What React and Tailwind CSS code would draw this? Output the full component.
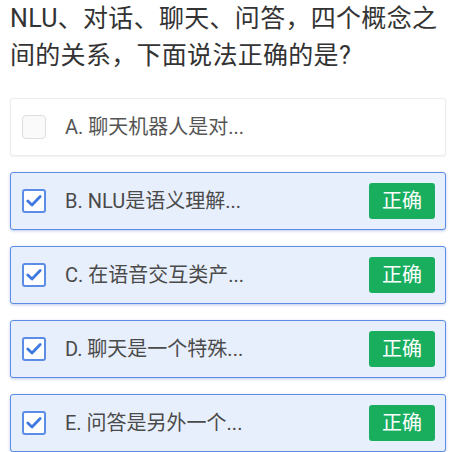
import React from "react";

const options = [
  { label: "A. 聊天机器人是对...", checked: false },
  { label: "B. NLU是语义理解...", checked: true },
  { label: "C. 在语音交互类产...", checked: true },
  { label: "D. 聊天是一个特殊...", checked: true },
  { label: "E. 问答是另外一个...", checked: true },
];

function Check() {
  return (
    <div className="w-[24px] h-[24px] rounded-[3px] border-2 border-[#5b8de6] bg-white flex items-center justify-center">
      <svg width="18" height="18" viewBox="0 0 18 18">
        <path d="M2.8 9 L7 13 L15.2 4.6" fill="none" stroke="#3f7ae0" strokeWidth="2.8" strokeLinecap="round" strokeLinejoin="round" />
      </svg>
    </div>
  );
}

export default function App() {
  return (
    <div
      className="w-[452px] h-[452px] bg-white pl-[10px] pr-[6px] overflow-hidden"
      style={{ fontFamily: 'Roboto, "Noto Sans CJK SC", sans-serif' }}
    >
      <div className="text-[25px] leading-[37px] text-[#333333] tracking-[0.3px]">
        NLU、对话、聊天、问答，四个概念之间的关系，下面说法正确的是?
      </div>
      <div className="mt-[24px] flex flex-col gap-[16px]">
        {options.map((o) =>
          o.checked ? (
            <div
              key={o.label}
              className="h-[58px] rounded-[3px] border-[1.5px] border-[#5b8de6] bg-[#e8effc] shadow-[0_1px_3px_rgba(60,100,200,0.35)] flex items-center pl-[11px] pr-[10px]"
            >
              <Check />
              <div className="ml-[19px] text-[20px] text-[#4a4a4a] flex-1">{o.label}</div>
              <div className="w-[66px] h-[36px] rounded-[3px] bg-[#19ae5e] text-white text-[20px] flex items-center justify-center">
                正确
              </div>
            </div>
          ) : (
            <div
              key={o.label}
              className="h-[58px] rounded-[3px] border border-[#ececec] bg-white shadow-[0_1px_2px_rgba(0,0,0,0.06)] flex items-center pl-[11px] pr-[10px]"
            >
              <div className="w-[24px] h-[24px] rounded-[4px] border-[1.5px] border-[#dedede] bg-[#fafafa]" />
              <div className="ml-[19px] text-[20px] text-[#555555] flex-1">{o.label}</div>
            </div>
          )
        )}
      </div>
    </div>
  );
}
